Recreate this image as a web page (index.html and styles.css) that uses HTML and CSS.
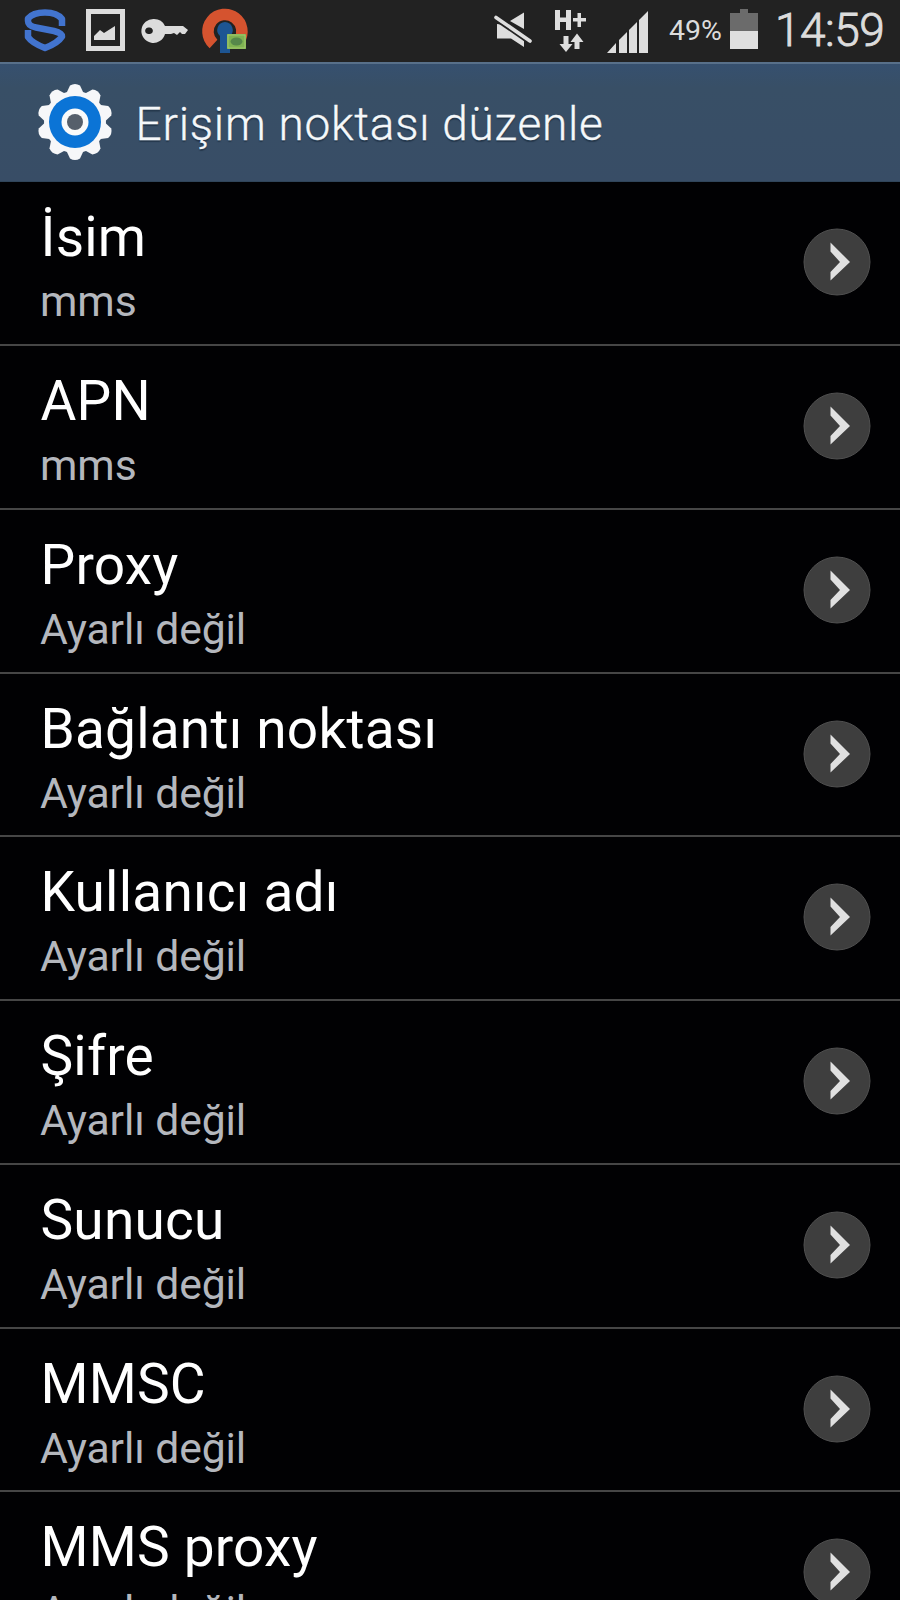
FILE: index.html
```html
<!DOCTYPE html>
<html lang="tr">
<head>
<meta charset="utf-8">
<title>Erişim noktası düzenle</title>
<link rel="stylesheet" href="styles.css">
</head>
<body>
<div class="screen">
  <div class="status">
    <svg class="status-left" width="260" height="62" viewBox="0 0 260 62">
      <g fill="none" stroke="#4274cf" stroke-width="6.5" stroke-linejoin="round">
        <path d="M62 26V19Q57 12.500 45 12.500Q33 12.500 28 18.500V21Q28 26 36 27.500L54 31Q62 33 62 36.500Q58 43 45 48Q32 43 28 37V30"/>
      </g>
      <path fill="#dcdcdc" fill-rule="evenodd" d="M86 9H125V51H86ZM91 14V46H120V14Z"/>
      <path fill="#dcdcdc" d="M94 40V36L100 30L104 33L115 26V40Z"/>
      <path fill="#dcdcdc" fill-rule="evenodd" d="M154 19A12 12 0 0 1 165 26H183L188 30L185 34H182L180 32L177 35L174 33L171 34H165A12 12 0 1 1 154 19ZM149 27.500A3.300 3.300 0 1 0 149 34A3.300 3.300 0 1 0 149 27.500Z"/>
      <path fill="none" stroke="#d5532f" stroke-width="11.500" d="M213.500 44A17 17 0 1 1 239 41"/>
      <path fill="#1d5593" d="M225 22A8 8 0 0 1 230 36V53H220V36A8 8 0 0 1 225 22Z"/>
      <path fill="#7fb252" d="M227 34H246V49H227Z"/>
      <ellipse cx="236.500" cy="41.500" rx="6" ry="4" fill="#56874a"/>
      <path fill="none" stroke="#a4c86c" d="M228 35H245V48H228Z"/>
    </svg>
    <div class="status-right">
      <svg width="170" height="62" viewBox="490 0 170 62" fill="#dedede">
        <path d="M498 24L506 25L525 38V47L512 38.500H498ZM511 21L525 12.500V29Z"/>
        <path d="M497 17.500L531 41" stroke="#222" stroke-width="7"/>
        <path d="M497 17.500L531 41" stroke="#dedede" stroke-width="3.600" stroke-linecap="round"/>
        <path d="M556 10H561V17.500H567V10H572V30H567V22H561V30H556ZM574 18H578.500V13H582V18H587V21.500H582V27H578.500V21.500H574Z"/>
        <path d="M564.500 36H569.500V44H573.500L567 52L560.500 44H564.500ZM575.500 49V42H571.500L578 33.500L584.500 42H580.500V49Z"/>
        <path d="M608 53L617 43V53ZM620 40L628 32V53H620ZM630 30L638 22V53H630ZM640 20L649 11V53H640Z"/>
      </svg>
      <span class="percent">49%</span>
      <svg class="battery" width="28" height="62" viewBox="0 0 28 62"><path fill="#6b6b6b" d="M0 13H10V9H18V13H28V31H0Z"/><path fill="#dfdfdf" d="M0 31H28V49H0Z"/></svg>
      <span class="clock">14:59</span>
    </div>
  </div>
  <header class="header">
    <svg width="80" height="80" viewBox="-40 -40 80 80" id="gear"></svg>
    <h1 class="heading">Erişim noktası düzenle</h1>
  </header>
  <main class="list" id="list"></main>
</div>
<script src="app.js"></script>
</body>
</html>
```
FILE: styles.css
```css
body { margin: 0; background: #000; font-family: Roboto, sans-serif; }
.screen { width: 900px; height: 1600px; overflow: hidden; }
.status { height: 62px; display: flex; justify-content: space-between; background: #222; color: #dcdcdc; }
.status-right { display: flex; line-height: 62px; white-space: nowrap; }
.percent { width: 61px; margin-left: 10px; font-size: 28.5px; letter-spacing: 0; }
.clock { width: 125px; margin-left: 17px; font-size: 46px; line-height: 60px; letter-spacing: -0.5px; font-weight: 300; -webkit-text-stroke: 0.9px #dcdcdc; }
.header { height: 119.5px; box-sizing: border-box; border-top: 2px solid #58708a; border-bottom: 1px solid #30455a; padding-left: 35px; display: flex; align-items: center; background: linear-gradient(#36506f, #384f66 20%, #384d66); }
.heading { margin: 3px 0 0 20.5px; font-size: 46px; font-weight: 300; color: #f5f8fa; letter-spacing: 0.75px; white-space: nowrap; text-shadow: 0 2px 1px #25384c; -webkit-text-stroke: 0.3px #f5f8fa; }
.list { padding-top: 0.75px; }
.row { height: 163.75px; box-sizing: border-box; border-bottom: 2.5px solid #464646; padding: 0 29px 0 40px; display: flex; justify-content: space-between; background: #010103; }
.texts { padding-top: 23px; white-space: nowrap; }
.title { margin-left: 0.5px; font-size: 55px; line-height: 64px; letter-spacing: 0.2px; color: #fff; }
.value { margin-top: 7px; font-size: 42.7px; line-height: 50px; letter-spacing: -0.1px; color: #b4b7bd; }
.arrow { width: 68px; height: 68px; margin-top: 46px; }
```
FILE: app.js
```javascript
const entries = [
  ["İsim", "mms"], ["APN", "mms"], ["Proxy"], ["Bağlantı noktası"],
  ["Kullanıcı adı"], ["Şifre"], ["Sunucu"], ["MMSC"], ["MMS proxy"]
];
document.getElementById("list").innerHTML = entries.map(([title, value = "Ayarlı değil"]) => `
  <div class="row">
    <div class="texts"><div class="title">${title}</div><div class="value">${value}</div></div>
    <svg class="arrow" viewBox="0 0 68 68">
      <circle cx="34" cy="34" r="33" fill="#3e3e3e" stroke="#505050"/>
      <path fill="#e0e0e0" d="M27.500 14.500L47 34L27.500 52.500V44L37 34L27.500 23.500Z"/>
    </svg>
  </div>`).join("");

// Ten-tooth gear
let teeth = "";
for (let i = 0; i < 10; i++) {
  teeth += `<path transform="rotate(${i * 36})" d="M-9-28L-5-36.500Q0-39.500 5-36.500L9-28Z"/>`;
}
document.getElementById("gear").innerHTML = `
  <g fill="#f6f7f9">${teeth}<circle r="31"/></g>
  <circle r="26" fill="#0b74d6"/><circle r="13.500" fill="#fafafa"/><circle r="8" fill="#565f6b"/>`;
```
